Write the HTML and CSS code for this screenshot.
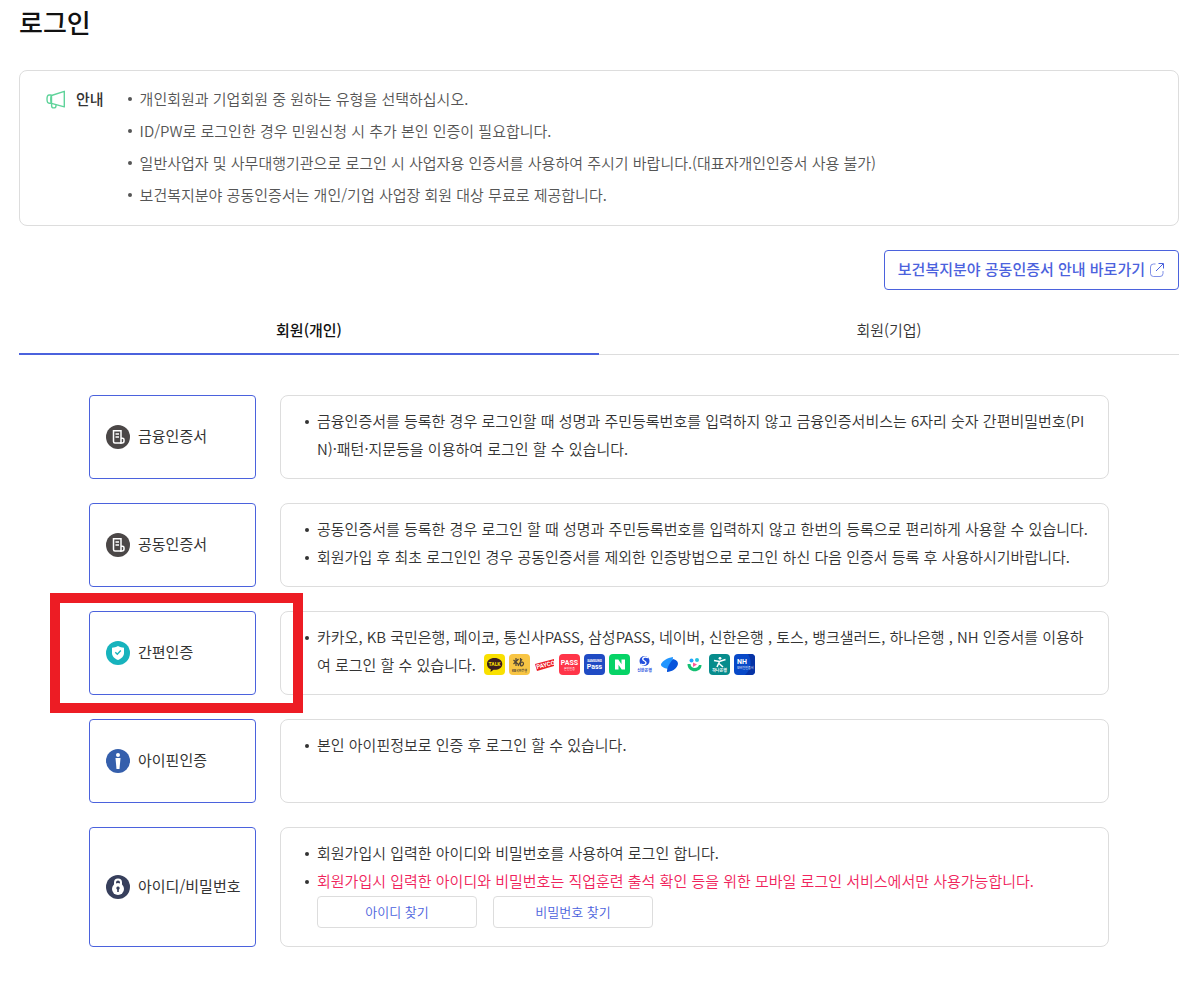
FILE: index.html
```
<!DOCTYPE html>
<html lang="ko">
<head>
    <meta charset="UTF-8">
    <meta name="viewport" content="width=device-width, initial-scale=1.0">
    <title>로그인</title>
    <link rel="stylesheet" href="styles.css">
</head>
<body>

<main class="page">
    <h1>로그인</h1>

    <section class="notice">
        <h2 class="notice-title">
            <svg class="notice-icon" width="20" height="20" viewBox="0 0 20 20" fill="none" stroke="#5fd39a" stroke-width="1.4" stroke-linejoin="round" aria-hidden="true">
                <path d="M5.5 6.500 18.3 2.300v15.6L5.5 14.300z"/>
                <path d="M5.5 6H3.2C1.8 6 1 7.700 1 10.100s.8 4.200 2.200 4.200h2.300M5.500 6c-1 2-1 6.300 0 8.300"/>
                <path d="M5.600 14.500v2.200a2.200 2.200 0 0 0 4.400 0v-1"/>
            </svg>
            안내
        </h2>
        <ul class="dots">
            <li>개인회원과 기업회원 중 원하는 유형을 선택하십시오.</li>
            <li>ID/PW로 로그인한 경우 민원신청 시 추가 본인 인증이 필요합니다.</li>
            <li>일반사업자 및 사무대행기관으로 로그인 시 사업자용 인증서를 사용하여 주시기 바랍니다.(대표자개인인증서 사용 불가)</li>
            <li>보건복지분야 공동인증서는 개인/기업 사업장 회원 대상 무료로 제공합니다.</li>
        </ul>
    </section>

    <div class="link-row">
        <a href="#" class="guide-link">
            <span class="label">보건복지분야 공동인증서 안내 바로가기</span>
            <svg width="16" height="16" viewBox="0 0 16 16" fill="none" stroke="#4b62dd" aria-hidden="true">
                <path d="M6.5 2h-2a3 3 0 0 0-3 3v6.500a3 3 0 0 0 3 3H11a3 3 0 0 0 3-3V9" opacity=".7"/>
                <path d="M7 9 14 2M9.500 1.500h5v5"/>
            </svg>
        </a>
    </div>

    <div class="tabs" role="tablist">
        <button type="button" class="tab active" role="tab" aria-selected="true">회원(개인)</button>
        <button type="button" class="tab" role="tab" aria-selected="false">회원(기업)</button>
    </div>

    <div class="methods">
        <div class="method">
            <button type="button" class="method-button">
                <svg width="24" height="24" viewBox="0 0 24 24" fill="none" stroke="#fff" stroke-width="1.5" aria-hidden="true">
                    <circle cx="12" cy="12" r="12" fill="#4b4747" stroke="none"/>
                    <path d="M7.500 5.800h7.500V18H9a1.500 1.500 0 0 1-1.500-1.500z"/>
                    <path d="M9.500 9h3.500M9.500 12h3.500" stroke-width="1.3"/>
                    <path d="M15 13.300h1.500a1.500 1.500 0 0 1 1.500 1.500V16a2 2 0 0 1-2 2h-2"/>
                </svg>
                <span class="label">금융인증서</span>
            </button>
            <div class="method-info">
                <ul class="dots">
                    <li>금융인증서를 등록한 경우 로그인할 때 성명과 주민등록번호를 입력하지 않고 금융인증서비스는 6자리 숫자 간편비밀번호(PIN)·패턴·지문등을 이용하여 로그인 할 수 있습니다.</li>
                </ul>
            </div>
        </div>

        <div class="method">
            <button type="button" class="method-button">
                <svg width="24" height="24" viewBox="0 0 24 24" fill="none" stroke="#fff" stroke-width="1.5" aria-hidden="true">
                    <circle cx="12" cy="12" r="12" fill="#4b4747" stroke="none"/>
                    <path d="M7.500 5.800h7.500V18H9a1.500 1.500 0 0 1-1.500-1.500z"/>
                    <path d="M9.500 9h3.500M9.500 12h3.500" stroke-width="1.3"/>
                    <path d="M15 13.300h1.500a1.500 1.500 0 0 1 1.500 1.500V16a2 2 0 0 1-2 2h-2"/>
                </svg>
                <span class="label">공동인증서</span>
            </button>
            <div class="method-info">
                <ul class="dots">
                    <li>공동인증서를 등록한 경우 로그인 할 때 성명과 주민등록번호를 입력하지 않고 한번의 등록으로 편리하게 사용할 수 있습니다.</li>
                    <li>회원가입 후 최초 로그인인 경우 공동인증서를 제외한 인증방법으로 로그인 하신 다음 인증서 등록 후 사용하시기바랍니다.</li>
                </ul>
            </div>
        </div>

        <div class="method highlighted">
            <button type="button" class="method-button">
                <svg width="24" height="24" viewBox="0 0 24 24" aria-hidden="true">
                    <circle cx="12" cy="12" r="12" fill="#17b3bd"/>
                    <path d="M12 5c2 1.300 4 1.700 6 1.700V12c0 3.300-2.500 5.700-6 7-3.500-1.300-6-3.700-6-7V6.700C8 6.700 10 6.300 12 5z" fill="#fff"/>
                    <path d="m9.300 11.300 2 2 3.500-3.800" fill="none" stroke="#17b3bd" stroke-width="1.4"/>
                </svg>
                <span class="label">간편인증</span>
            </button>
            <div class="method-info">
                <ul class="dots">
                    <li>카카오, KB 국민은행, 페이코, 통신사PASS, 삼성PASS, 네이버, 신한은행 , 토스, 뱅크샐러드, 하나은행 , NH 인증서를 이용하여 로그인 할 수 있습니다.
                        <span class="providers">
                            <svg viewBox="0 0 22 22" role="img" aria-label="카카오">
                                <rect width="21" height="21" rx="4" fill="#f9e000"/>
                                <path d="M10.500 4C6 4 3 6.500 3 10c0 2.500 1.300 4.300 3.800 5.300L6.500 18l3-2.200c5 .4 8.800-2 8.800-5.800C18.300 6.500 15 4 10.500 4z" fill="#3a1d1d"/>
                                <text x="10.500" y="12" font-size="5" font-weight="700" fill="#f9e000" text-anchor="middle">TALK</text>
                            </svg>
                            <svg viewBox="0 0 22 22" role="img" aria-label="KB 국민은행">
                                <rect width="21" height="21" rx="4" fill="#f8c544"/>
                                <path d="M7 4v8M4.500 6l5 4.500M9.500 5 4.500 10M13 5l-4 7M11.500 4v8M11.500 8.500c4-2 4 3.500 0 3.500" fill="none" stroke="#514636" stroke-width="1.2"/>
                                <text x="10.500" y="18" font-size="3" font-weight="700" fill="#514636" text-anchor="middle">KB국민은행</text>
                            </svg>
                            <svg viewBox="0 0 22 22" role="img" aria-label="페이코">
                                <path d="m1 10 19-5v7L3 17z" fill="#ed2027"/>
                                <text x="3" y="15" font-size="6" font-weight="700" fill="#fff" transform="rotate(-14 3 15)">PAYCO</text>
                            </svg>
                            <svg viewBox="0 0 22 22" role="img" aria-label="통신사PASS">
                                <rect width="21" height="21" rx="4" fill="#ff3549"/>
                                <text x="10.500" y="11" font-size="7" font-weight="700" fill="#fff" text-anchor="middle">PASS</text>
                                <text x="10.500" y="16" font-size="3" fill="#fff" text-anchor="middle">본인인증</text>
                            </svg>
                            <svg viewBox="0 0 22 22" role="img" aria-label="삼성PASS">
                                <rect width="21" height="21" rx="4" fill="#204bc4"/>
                                <text x="10.500" y="8" font-size="3" font-weight="700" fill="#fff" text-anchor="middle">SAMSUNG</text>
                                <text x="10.500" y="15" font-size="7" font-weight="700" fill="#fff" text-anchor="middle">Pass</text>
                            </svg>
                            <svg viewBox="0 0 22 22" role="img" aria-label="네이버">
                                <rect width="21" height="21" rx="4" fill="#06d366"/>
                                <path d="M6 5.500h3.300l3.200 4.700V5.500H16v10h-3.300l-3.200-4.700v4.700H6z" fill="#fff"/>
                            </svg>
                            <svg viewBox="0 0 22 22" role="img" aria-label="신한은행">
                                <circle cx="10.500" cy="7" r="5" fill="#2450dc"/>
                                <path d="M14 3.500C9 2 7 5 10.500 7s0 5-3.500 3" fill="none" stroke="#fff" stroke-width="1.4"/>
                                <text x="10.500" y="18" font-size="4" font-weight="700" fill="#2450dc" text-anchor="middle">신한은행</text>
                            </svg>
                            <svg viewBox="0 0 22 22" role="img" aria-label="토스">
                                <path d="M2 10c1.500-3 6-6 12-7l-1 9-4 3C5 14 1.500 12.500 2 10z" fill="#2196ff"/>
                                <path d="M14 5c4 1 6 3.500 4.500 6.500C17 15 13 17.500 8 18c0-3 1-7 6-13z" fill="#0754dc"/>
                            </svg>
                            <svg viewBox="0 0 22 22" role="img" aria-label="뱅크샐러드">
                                <path d="M3.500 10h3c0 5 7.500 5 8.500 1h2.500c0 8.500-14 8.500-14-1z" fill="#13bf72"/>
                                <circle cx="7.500" cy="6.500" r="2" fill="#22a5ff"/>
                                <circle cx="13" cy="6" r="2" fill="#28c3dd"/>
                                <path d="m9 8.500 4 2-4 2.500z" fill="#ff579a"/>
                            </svg>
                            <svg viewBox="0 0 22 22" role="img" aria-label="하나은행">
                                <rect width="21" height="21" rx="4" fill="#078c8c"/>
                                <circle cx="11" cy="4.300" r="1.400" fill="#fff"/>
                                <path d="m5 6.500 5.500 1 6-2M10.500 7.500 8 13M10 9.500l4 3.500" fill="none" stroke="#fff" stroke-width="1.6"/>
                                <text x="10.500" y="18" font-size="4" font-weight="700" fill="#fff" text-anchor="middle">하나은행</text>
                            </svg>
                            <svg viewBox="0 0 22 22" role="img" aria-label="NH">
                                <rect width="21" height="21" rx="4" fill="#0849c8"/>
                                <path d="M14 0h3a4 4 0 0 1 4 4v13a4 4 0 0 1-4 4h-6C18 15 18 6 14 0z" fill="#0733a5"/>
                                <text x="3" y="10" font-size="7" font-weight="700" fill="#fff">NH</text>
                                <text x="3" y="15" font-size="3" fill="#fff">모바일인증서</text>
                            </svg>
                        </span>
                    </li>
                </ul>
            </div>
        </div>

        <div class="method">
            <button type="button" class="method-button">
                <svg width="24" height="24" viewBox="0 0 24 24" aria-hidden="true">
                    <circle cx="12" cy="12" r="12" fill="#355fac"/>
                    <circle cx="12" cy="6" r="2" fill="#fff"/>
                    <path d="M9.500 9h5l-1 11h-3z" fill="#fff"/>
                </svg>
                <span class="label">아이핀인증</span>
            </button>
            <div class="method-info">
                <ul class="dots">
                    <li>본인 아이핀정보로 인증 후 로그인 할 수 있습니다.</li>
                </ul>
            </div>
        </div>

        <div class="method">
            <button type="button" class="method-button">
                <svg width="24" height="24" viewBox="0 0 24 24" aria-hidden="true">
                    <circle cx="12" cy="12" r="12" fill="#373f5c"/>
                    <path d="M9 11V7.500a3 3 0 0 1 6 0V11" fill="none" stroke="#fff" stroke-width="2"/>
                    <circle cx="12" cy="14" r="6" fill="#fff"/>
                    <path d="M12 11.500a1.700 1.700 0 0 1 .8 3.200V17h-1.600v-2.300a1.700 1.700 0 0 1 .8-3.200z" fill="#373f5c"/>
                </svg>
                <span class="label">아이디/비밀번호</span>
            </button>
            <div class="method-info">
                <ul class="dots">
                    <li>회원가입시 입력한 아이디와 비밀번호를 사용하여 로그인 합니다.</li>
                    <li><span class="warning">회원가입시 입력한 아이디와 비밀번호는 직업훈련 출석 확인 등을 위한 모바일 로그인 서비스에서만 사용가능합니다.</span></li>
                </ul>
                <div class="find-buttons">
                    <button type="button">아이디 찾기</button>
                    <button type="button">비밀번호 찾기</button>
                </div>
            </div>
        </div>
    </div>
</main>

</body>
</html>
```

FILE: styles.css
```
*, *::before, *::after {
    box-sizing: border-box;
}

body {
    margin: 0;
    background-color: #fff;
    color: #333;
    font-family: "Noto Sans CJK KR", sans-serif;
    font-size: 15px;
    font-weight: 350;
}

button {
    font-family: inherit;
    background-color: #fff;
    cursor: pointer;
}

.page {
    padding: 3px 24px 44px 19px;
}

h1 {
    margin: 0 0 29px;
    color: #111;
    font-size: 26px;
    font-weight: 500;
    line-height: 38px;
}

.notice {
    display: flex;
    padding: 12px 26px 14px;
    border: 1px solid #ddd;
    border-radius: 8px;
    color: #555;
    line-height: 32px;
}

.notice-title {
    display: flex;
    align-items: center;
    gap: 10px;
    height: 32px;
    margin: 0 23px 0 0;
    color: #333;
    font-size: 15px;
    font-weight: 500;
}

.dots {
    margin: 0;
    padding: 0;
    list-style: none;
}

.dots li {
    position: relative;
    padding-left: 13px;
    word-break: break-all;
}

.dots li::before {
    content: "";
    position: absolute;
    top: 14px;
    left: 1px;
    width: 4px;
    height: 4px;
    border-radius: 50%;
    background-color: currentColor;
}

.link-row {
    display: flex;
    justify-content: flex-end;
    margin: 24px 0 16px;
}

.guide-link {
    display: flex;
    align-items: center;
    gap: 4px;
    height: 40px;
    padding: 0 13px;
    border: 1px solid #4b62dd;
    border-radius: 4px;
    color: #4b62dd;
    font-weight: 500;
    text-decoration: none;
}

.label {
    padding-bottom: 3px;
    white-space: nowrap;
}

.tabs {
    display: flex;
}

.tab {
    flex: 1;
    height: 49px;
    padding: 0 0 2px;
    border: 0;
    border-bottom: 1px solid #ddd;
    color: #333;
    font-size: 15px;
    font-weight: 350;
}

.tab.active {
    padding: 0;
    border-bottom: 2px solid #4b62dd;
    color: #111;
    font-weight: 500;
}

.methods {
    display: grid;
    gap: 24px;
    padding: 40px 70px 0;
}

.method {
    position: relative;
    display: flex;
    gap: 24px;
    min-height: 84px;
}

.method-button {
    display: flex;
    flex: 0 0 167px;
    align-items: center;
    gap: 8px;
    padding: 0 0 0 16px;
    border: 1px solid #4b62dd;
    border-radius: 4px;
    color: #333;
    font-size: 15px;
    font-weight: 400;
}

.method-info {
    flex: 1;
    padding: 11px 16px 15px 23px;
    border: 1px solid #ddd;
    border-radius: 8px;
    line-height: 28px;
}

.method-info .dots li::before {
    top: 13px;
}

.highlighted::after {
    content: "";
    position: absolute;
    top: -18px;
    bottom: -18px;
    left: -39px;
    width: 253px;
    border: 10px solid #ed1c24;
    pointer-events: none;
}

.providers {
    display: inline-flex;
    gap: 3px;
    margin-left: 4px;
    vertical-align: -5px;
}

.providers svg {
    width: 22px;
    height: 22px;
    font-family: Roboto, "Noto Sans CJK KR", sans-serif;
}

.warning {
    color: #f0245c;
}

.find-buttons {
    display: flex;
    gap: 16px;
    padding: 1px 0 3px 13px;
}

.find-buttons button {
    width: 160px;
    height: 32px;
    padding: 0 0 2px;
    border: 1px solid #ddd;
    border-radius: 4px;
    color: #4b62dd;
    font-size: 13px;
    font-weight: 350;
}
```
